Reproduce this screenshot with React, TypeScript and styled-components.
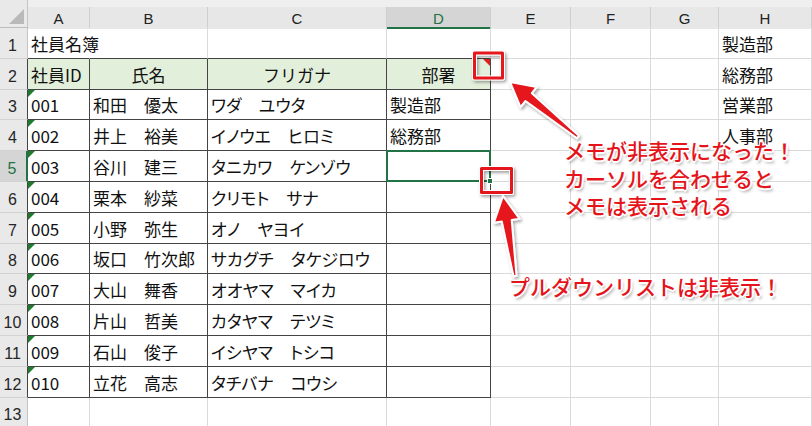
import React from "react";
import styled, { createGlobalStyle } from "styled-components";

const GlobalStyle = createGlobalStyle`
  html, body {
    margin: 0;
    padding: 0;
    background: #ffffff;
    overflow: hidden;
  }
`;

const GREEN = "#217346";
const DARK = "#444444";
const LIGHT = "#dadada";
const JP = `"Noto Sans CJK JP", "Noto Sans", sans-serif`;

const Sheet = styled.div`
  position: relative;
  width: 812px;
  height: 426px;
  overflow: hidden;
  background: #ffffff;
`;

const Grid = styled.div`
  display: grid;
  grid-template-columns: 28px 62px 118px 179px 104px 80px 80px 68px 93px;
  grid-template-rows: 28px repeat(13, 30.8px);
  box-sizing: border-box;
  * {
    box-sizing: border-box;
  }
`;

const Corner = styled.div`
  display: flex;
  align-items: flex-end;
  justify-content: flex-end;
  padding: 0 3px 3px 0;
  background: #e9e9e9;
  border-right: 1px solid #c4c4c4;
  border-bottom: 1px solid #bdbdbd;
`;

const CornerMark = styled.span`
  width: 0;
  height: 0;
  border-left: 15px solid transparent;
  border-bottom: 15px solid #b9b9b9;
`;

const ColHeader = styled.div`
  display: flex;
  flex-direction: column;
  padding-top: 7px;
  background: #efefef;
  border-bottom: 1px solid #bdbdbd;
`;

const ColLabel = styled.div<{ $active?: boolean }>`
  flex: 1;
  display: flex;
  align-items: center;
  justify-content: center;
  padding-top: 3px;
  background: ${(p) => (p.$active ? "#d5d5d5" : "#e7e7e7")};
  border-right: 1px solid #cfcfcf;
  border-bottom: 2px solid ${(p) => (p.$active ? GREEN : "transparent")};
  margin-bottom: -1px;
  color: ${(p) => (p.$active ? GREEN : "#222222")};
  font-family: "Liberation Sans", Arial, sans-serif;
  font-size: 15px;
`;

const RowHeader = styled.div<{ $active?: boolean; $edge?: boolean }>`
  display: flex;
  align-items: flex-end;
  justify-content: center;
  padding: 0 2px 3px 0;
  background: ${(p) => (p.$active ? "#d5d5d5" : "#e9e9e9")};
  border-bottom: 1px solid #d2d2d2;
  border-right: ${(p) =>
    p.$active
      ? `2px solid ${GREEN}`
      : p.$edge
      ? `1px solid ${DARK}`
      : "1px solid #c4c4c4"};
  color: ${(p) => (p.$active ? GREEN : "#262626")};
  font-family: "Liberation Sans", Arial, sans-serif;
  font-size: 16px;
  line-height: 18px;
`;

type Edge = "dark" | "light" | "none";

const Cell = styled.div<{
  $center?: boolean;
  $fill?: string;
  $right?: Edge;
  $bottom?: Edge;
  $kana?: boolean;
}>`
  position: relative;
  display: flex;
  align-items: flex-end;
  justify-content: ${(p) => (p.$center ? "center" : "flex-start")};
  padding: 0 3px 2px;
  background: ${(p) => p.$fill ?? "transparent"};
  border-right: 1px solid
    ${(p) => (p.$right === "dark" ? DARK : p.$right === "none" ? "transparent" : LIGHT)};
  border-bottom: 1px solid ${(p) => (p.$bottom === "dark" ? DARK : LIGHT)};
  font-family: ${JP};
  font-size: 17px;
  line-height: 24px;
  color: #111111;
  white-space: nowrap;
  font-feature-settings: ${(p) => (p.$kana ? `"palt"` : "normal")};
`;

const TextFlag = styled.span`
  position: absolute;
  top: 0;
  left: 0;
  width: 0;
  height: 0;
  border-top: 7px solid #1f7a2e;
  border-right: 7px solid transparent;
`;

const NoteFlag = styled.span`
  position: absolute;
  top: 0;
  right: 0;
  width: 0;
  height: 0;
  border-top: 7px solid #e0201a;
  border-left: 7px solid transparent;
`;

const Selection = styled.span`
  position: absolute;
  top: -1px;
  left: -1px;
  right: -1px;
  bottom: -1px;
  border: 2px solid ${GREEN};
  z-index: 2;
`;

const Handle = styled.span`
  position: absolute;
  right: -4px;
  bottom: -4px;
  width: 6px;
  height: 6px;
  background: ${GREEN};
  border: 1px solid #ffffff;
`;

const Overlay = styled.svg`
  position: absolute;
  top: 0;
  left: 0;
  pointer-events: none;
  z-index: 5;
`;

const Callout = styled.div<{ $x: number; $y: number }>`
  position: absolute;
  left: ${(p) => p.$x}px;
  top: ${(p) => p.$y}px;
  z-index: 6;
  font-family: ${JP};
  font-size: 21px;
  font-weight: 500;
  line-height: 27.5px;
  color: #e5141b;
  white-space: nowrap;
  text-shadow: 1px 1px 0 #fff, -1px -1px 0 #fff, 1px -1px 0 #fff, -1px 1px 0 #fff,
    0 2px 0 #fff, 2px 0 0 #fff, 2px 3px 3px rgba(0, 0, 0, 0.35);
`;

const COLS = ["A", "B", "C", "D", "E", "F", "G", "H"];

const people: [string, string, string, string][] = [
  ["001", "和田　優太", "ワダ　ユウタ", "製造部"],
  ["002", "井上　裕美", "イノウエ　ヒロミ", "総務部"],
  ["003", "谷川　建三", "タニカワ　ケンゾウ", ""],
  ["004", "栗本　紗菜", "クリモト　サナ", ""],
  ["005", "小野　弥生", "オノ　ヤヨイ", ""],
  ["006", "坂口　竹次郎", "サカグチ　タケジロウ", ""],
  ["007", "大山　舞香", "オオヤマ　マイカ", ""],
  ["008", "片山　哲美", "カタヤマ　テツミ", ""],
  ["009", "石山　俊子", "イシヤマ　トシコ", ""],
  ["010", "立花　高志", "タチバナ　コウシ", ""],
];

const depts = ["製造部", "総務部", "営業部", "人事部"];

function arrow(
  tail: [number, number],
  tip: [number, number],
  headLen: number,
  headHalf: number,
  neckHalf: number,
  tailHalf: number
) {
  const dx = tip[0] - tail[0];
  const dy = tip[1] - tail[1];
  const len = Math.hypot(dx, dy);
  const ux = dx / len;
  const uy = dy / len;
  const nx = -uy;
  const ny = ux;
  const bx = tip[0] - ux * headLen;
  const by = tip[1] - uy * headLen;
  const pts = [
    [tail[0] + nx * tailHalf, tail[1] + ny * tailHalf],
    [bx + nx * neckHalf, by + ny * neckHalf],
    [bx + nx * headHalf, by + ny * headHalf],
    tip,
    [bx - nx * headHalf, by - ny * headHalf],
    [bx - nx * neckHalf, by - ny * neckHalf],
    [tail[0] - nx * tailHalf, tail[1] - ny * tailHalf],
  ];
  return pts.map((p) => `${p[0].toFixed(1)},${p[1].toFixed(1)}`).join(" ");
}

const App: React.FC = () => {
  const cells: React.ReactNode[] = [];

  cells.push(
    <Corner key="corner">
      <CornerMark />
    </Corner>
  );
  COLS.forEach((c) =>
    cells.push(
      <ColHeader key={`h-${c}`}>
        <ColLabel $active={c === "D"}>{c}</ColLabel>
      </ColHeader>
    )
  );

  for (let r = 1; r <= 13; r++) {
    const inTable = r >= 2 && r <= 12;
    cells.push(
      <RowHeader key={`r-${r}`} $active={r === 5} $edge={inTable}>
        {r}
      </RowHeader>
    );

    COLS.forEach((c, ci) => {
      const key = `${c}${r}`;
      const tableCol = ci <= 3;
      let right: Edge = "light";
      let bottom: Edge = "light";
      if (tableCol && (inTable || r === 1)) {
        bottom = "dark";
      }
      if (tableCol && inTable) right = "dark";
      if (r === 1 && c === "A") right = "none";

      let content: React.ReactNode = null;
      let center = false;
      let fill: string | undefined;

      if (r === 1 && c === "A") content = "社員名簿";
      if (r === 2 && tableCol) {
        fill = "#e2efda";
        content = ["社員ID", "氏名", "フリガナ", "部署"][ci];
        center = ci > 0;
      }
      if (r >= 3 && r <= 12 && tableCol) {
        content = people[r - 3][ci];
      }
      if (c === "H" && r <= 4) content = depts[r - 1];

      cells.push(
        <Cell
          key={key}
          $center={center}
          $fill={fill}
          $right={right}
          $bottom={bottom}
          $kana={c === "C" && r >= 3}
        >
          {c === "A" && r >= 3 && r <= 12 && <TextFlag />}
          {c === "D" && r === 2 && <NoteFlag />}
          {c === "D" && r === 5 && (
            <Selection>
              <Handle />
            </Selection>
          )}
          {content}
        </Cell>
      );
    });
  }

  return (
    <Sheet>
      <GlobalStyle />
      <Grid>{cells}</Grid>

      <Overlay width={812} height={426} viewBox="0 0 812 426">
        <defs>
          <filter id="shade" x="-20%" y="-20%" width="140%" height="140%">
            <feDropShadow dx="1.5" dy="2" stdDeviation="1.5" floodColor="#000" floodOpacity="0.35" />
          </filter>
        </defs>
        <g filter="url(#shade)" stroke="#ffffff" strokeWidth={2} strokeLinejoin="round">
          <rect x={474.5} y={53} width={28} height={25} fill="none" stroke="#ffffff" strokeWidth={5} />
          <rect x={474.5} y={53} width={28} height={25} fill="none" stroke="#e5141b" strokeWidth={3} />
          <rect x={481.5} y={168.5} width={30} height={24} fill="none" stroke="#ffffff" strokeWidth={5} />
          <rect x={481.5} y={168.5} width={30} height={24} fill="none" stroke="#e5141b" strokeWidth={3} />
          <polygon
            points={arrow([578, 137], [510, 82], 24, 13, 5, 1.5)}
            fill="#e5141b"
          />
          <polygon
            points={arrow([515, 276], [503, 196], 25, 13, 5, 1.5)}
            fill="#e5141b"
          />
        </g>
      </Overlay>

      <Callout $x={564} $y={137}>
        メモが非表示になった！
        <br />
        カーソルを合わせると
        <br />
        メモは表示される
      </Callout>
      <Callout $x={509} $y={273}>プルダウンリストは非表示！</Callout>
    </Sheet>
  );
};

export default App;
